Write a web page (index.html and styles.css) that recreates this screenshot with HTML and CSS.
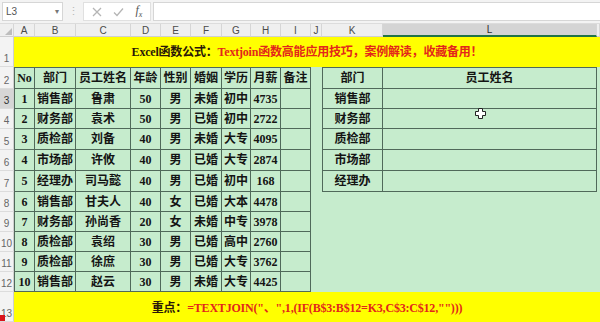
FILE: index.html
```html
<!DOCTYPE html>
<html>
<head>
<meta charset="utf-8">
<link rel="stylesheet" href="styles.css">
</head>
<body>
<div class="app">
  <div class="formula-bar">
    <div class="namebox"><span class="ref">L3</span><span class="dd">▾</span></div>
    <div class="grip">⋮</div>
    <div class="fx-buttons">
      <svg class="ico" width="10" height="10" viewBox="0 0 10 10"><path d="M1 1 L9 9 M9 1 L1 9" stroke="#b5b5b5" stroke-width="1.3" fill="none"/></svg>
      <svg class="ico" width="11" height="10" viewBox="0 0 11 10"><path d="M1 5.5 L4 8.5 L10 1.5" stroke="#b5b5b5" stroke-width="1.3" fill="none"/></svg>
      <span class="fx">f<sub>x</sub></span>
    </div>
    <div class="formula-input"></div>
  </div>
  <div class="sheet">
    <!-- column headers -->
    <div class="corner"><span class="tri"></span></div>
    <div class="ch">A</div><div class="ch">B</div><div class="ch">C</div><div class="ch">D</div><div class="ch">E</div><div class="ch">F</div><div class="ch">G</div><div class="ch">H</div><div class="ch">I</div><div class="ch">J</div><div class="ch">K</div><div class="ch sel">L</div><div class="ch"></div>

    <!-- row 1 -->
    <div class="rh">1</div>
    <div class="banner"><span class="dk">Excel函数公式：</span><span class="rd">Textjoin函数高能应用技巧，案例解读，收藏备用！</span></div>

    <!-- row 2 -->
    <div class="rh">2</div>
    <div class="c b bt bl">No</div><div class="c b bt">部门</div><div class="c b bt">员工姓名</div><div class="c b bt">年龄</div><div class="c b bt">性别</div><div class="c b bt">婚姻</div><div class="c b bt">学历</div><div class="c b bt">月薪</div><div class="c b bt">备注</div>
    <div class="c"></div><div class="c b bt bl">部门</div><div class="c b bt">员工姓名</div><div class="c"></div>

    <!-- row 3 -->
    <div class="rh rsel">3</div>
    <div class="c b bl">1</div><div class="c b">销售部</div><div class="c b">鲁肃</div><div class="c b">50</div><div class="c b">男</div><div class="c b">未婚</div><div class="c b">初中</div><div class="c b">4735</div><div class="c b"></div>
    <div class="c"></div><div class="c b bl">销售部</div><div class="c b"></div><div class="c"></div>

    <!-- row 4 -->
    <div class="rh">4</div>
    <div class="c b bl">2</div><div class="c b">财务部</div><div class="c b">袁术</div><div class="c b">50</div><div class="c b">男</div><div class="c b">已婚</div><div class="c b">初中</div><div class="c b">2722</div><div class="c b"></div>
    <div class="c"></div><div class="c b bl">财务部</div><div class="c b"></div><div class="c"></div>

    <!-- row 5 -->
    <div class="rh">5</div>
    <div class="c b bl">3</div><div class="c b">质检部</div><div class="c b">刘备</div><div class="c b">40</div><div class="c b">男</div><div class="c b">未婚</div><div class="c b">大专</div><div class="c b">4095</div><div class="c b"></div>
    <div class="c"></div><div class="c b bl">质检部</div><div class="c b"></div><div class="c"></div>

    <!-- row 6 -->
    <div class="rh">6</div>
    <div class="c b bl">4</div><div class="c b">市场部</div><div class="c b">许攸</div><div class="c b">40</div><div class="c b">男</div><div class="c b">已婚</div><div class="c b">大专</div><div class="c b">2874</div><div class="c b"></div>
    <div class="c"></div><div class="c b bl">市场部</div><div class="c b"></div><div class="c"></div>

    <!-- row 7 -->
    <div class="rh">7</div>
    <div class="c b bl">5</div><div class="c b">经理办</div><div class="c b">司马懿</div><div class="c b">40</div><div class="c b">男</div><div class="c b">已婚</div><div class="c b">初中</div><div class="c b">168</div><div class="c b"></div>
    <div class="c"></div><div class="c b bl">经理办</div><div class="c b"></div><div class="c"></div>

    <!-- row 8 -->
    <div class="rh">8</div>
    <div class="c b bl">6</div><div class="c b">销售部</div><div class="c b">甘夫人</div><div class="c b">40</div><div class="c b">女</div><div class="c b">已婚</div><div class="c b">大本</div><div class="c b">4478</div><div class="c b"></div>
    <div class="c"></div><div class="c"></div><div class="c"></div><div class="c"></div>

    <!-- row 9 -->
    <div class="rh">9</div>
    <div class="c b bl">7</div><div class="c b">财务部</div><div class="c b">孙尚香</div><div class="c b">20</div><div class="c b">女</div><div class="c b">未婚</div><div class="c b">中专</div><div class="c b">3978</div><div class="c b"></div>
    <div class="c"></div><div class="c"></div><div class="c"></div><div class="c"></div>

    <!-- row 10 -->
    <div class="rh">10</div>
    <div class="c b bl">8</div><div class="c b">质检部</div><div class="c b">袁绍</div><div class="c b">30</div><div class="c b">男</div><div class="c b">已婚</div><div class="c b">高中</div><div class="c b">2760</div><div class="c b"></div>
    <div class="c"></div><div class="c"></div><div class="c"></div><div class="c"></div>

    <!-- row 11 -->
    <div class="rh">11</div>
    <div class="c b bl">9</div><div class="c b">质检部</div><div class="c b">徐庶</div><div class="c b">30</div><div class="c b">男</div><div class="c b">已婚</div><div class="c b">大专</div><div class="c b">3762</div><div class="c b"></div>
    <div class="c"></div><div class="c"></div><div class="c"></div><div class="c"></div>

    <!-- row 12 -->
    <div class="rh">12</div>
    <div class="c b bl">10</div><div class="c b">销售部</div><div class="c b">赵云</div><div class="c b">30</div><div class="c b">男</div><div class="c b">未婚</div><div class="c b">大专</div><div class="c b">4425</div><div class="c b"></div>
    <div class="c"></div><div class="c"></div><div class="c"></div><div class="c"></div>

    <!-- row 13 -->
    <div class="rh last"><span class="redmark"></span>13</div>
    <div class="banner foot"><span class="dk">重点：</span><span class="rd">=TEXTJOIN("、",1,(IF(B$3:B$12=K3,C$3:C$12,"")))</span></div>
  </div>
  <svg class="cursor" width="11" height="11" viewBox="0 0 11 11"><path d="M3.5 0.5 H7.5 V3.5 H10.5 V7.5 H7.5 V10.5 H3.5 V7.5 H0.5 V3.5 H3.5 Z" fill="#fff" stroke="#222" stroke-width="1"/></svg>
</div>
</body>
</html>
```
FILE: styles.css
```css
html, body {
  margin: 0;
  padding: 0;
}
body {
  width: 600px;
  height: 322px;
  overflow: hidden;
  background: #ffffff;
  font-family: "Liberation Sans", Arial, sans-serif;
}
.app {
  position: relative;
  width: 600px;
  height: 322px;
  overflow: hidden;
}
.formula-bar {
  height: 24px;
  background: #f3f3f3;
  display: flex;
  align-items: center;
  box-sizing: border-box;
  padding: 0 0 0 2px;
  border-bottom: 1px solid #dcdcdc;
}
.namebox {
  width: 61px;
  height: 19px;
  box-sizing: border-box;
  background: #fff;
  border: 1px solid #d6d6d6;
  display: flex;
  align-items: center;
  justify-content: space-between;
  padding: 0 3px;
  font-size: 10px;
  color: #555;
}
.namebox .dd {
  font-size: 8px;
  color: #777;
}
.grip {
  width: 20px;
  text-align: center;
  color: #b8b8b8;
  font-size: 11px;
}
.fx-buttons {
  width: 68px;
  height: 19px;
  box-sizing: border-box;
  background: #fff;
  border: 1px solid #e0e0e0;
  display: flex;
  align-items: center;
  justify-content: space-around;
  padding: 0 2px;
}
.fx {
  font-family: "Liberation Serif", serif;
  font-style: italic;
  font-size: 12px;
  color: #555;
}
.fx sub {
  font-size: 8px;
}
.formula-input {
  flex: 1;
  height: 19px;
  margin-left: 2px;
  background: #fff;
  border: 1px solid #d6d6d6;
  border-right: none;
  box-sizing: border-box;
}
.sheet {
  display: grid;
  grid-template-columns: 14px 21px 41px 55px 30px 30px 31px 29px 30px 30px 11px 61px 214px 3px;
  grid-template-rows: 13px 30px 22px 20px 20px 21px 21px 21px 20px 20px 20px 20px 20px 30px;
  font-family: "Liberation Serif", "Noto Sans CJK SC", serif;
  font-weight: bold;
  font-size: 12px;
  color: #141414;
}
.sheet > div {
  box-sizing: border-box;
  overflow: hidden;
  white-space: nowrap;
}
.corner, .ch {
  background: #efefef;
  border-right: 1px solid #d6d6d6;
  border-bottom: 1px solid #cfcfcf;
  font-family: "Liberation Sans", sans-serif;
  font-weight: normal;
  font-size: 10px;
  color: #4a4a4a;
  display: flex;
  align-items: center;
  justify-content: center;
}
.corner {
  position: relative;
}
.ch.sel {
  background: #d4d4d4;
  color: #2b2b2b;
  border-bottom: 2px solid #217346;
}
.tri {
  position: absolute;
  right: 1px;
  bottom: 1px;
  width: 0;
  height: 0;
  border-left: 7px solid transparent;
  border-bottom: 7px solid #bdbdbd;
}
.rh {
  position: relative;
  background: #f3f3f3;
  border-right: 1px solid #cfcfcf;
  border-bottom: 1px solid #dcdcdc;
  font-family: "Liberation Sans", sans-serif;
  font-weight: normal;
  font-size: 10px;
  color: #666;
  display: flex;
  align-items: flex-end;
  justify-content: center;
  padding-bottom: 1px;
  line-height: 12px;
}
.rh.rsel {
  background: #d6d6d6;
  color: #333;
}
.redmark {
  position: absolute;
  left: 0;
  bottom: 0;
  width: 5px;
  height: 6px;
  background: #d8131b;
}
.banner {
  grid-column: 2 / -1;
  background: #ffff00;
  display: flex;
  align-items: center;
  justify-content: center;
  letter-spacing: -0.2px;
  line-height: 14px;
}
.banner.foot {
  padding-top: 2px;
}
.dk { color: #2a1808; }
.rd { color: #e3261b; }
.c {
  background: #c6eccd;
  display: flex;
  align-items: center;
  justify-content: center;
  line-height: 14px;
}
.b {
  border-right: 1px solid #50695a;
  border-bottom: 1px solid #50695a;
}
.bt { border-top: 1px solid #50695a; }
.bl { border-left: 1px solid #50695a; }
.cursor {
  position: absolute;
  left: 475px;
  top: 108px;
}
```
